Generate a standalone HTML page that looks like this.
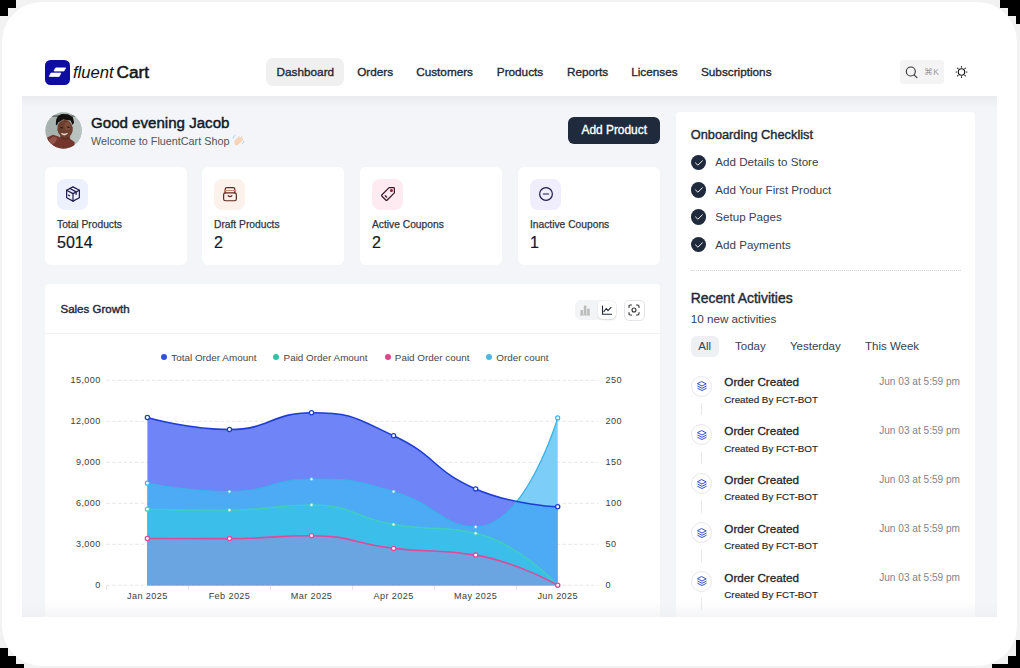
<!DOCTYPE html><html><head><meta charset="utf-8"><style>
*{box-sizing:border-box;margin:0;padding:0}
html,body{width:1020px;height:668px;overflow:hidden;background:#f2f2f2;font-family:"Liberation Sans",sans-serif;color:#1f2937}
.abs{position:absolute}
.frame{position:absolute;left:2px;top:2px;width:1015px;height:664px;background:#fff;border-radius:40px;overflow:hidden}
.blk{position:absolute;background:#000}
.content{position:absolute;left:22px;top:96px;width:975px;height:521px;background:#f4f5f8}
.cshadow{position:absolute;left:22px;top:96px;width:975px;height:12px;background:linear-gradient(to bottom,#eaebee,rgba(244,245,248,0))}
.card{position:absolute;background:#fff;border-radius:6px}
.t{position:absolute;white-space:nowrap;line-height:1}
.nav{font-size:11.75px;color:#1f2937;-webkit-text-stroke:0.35px #1f2937}
.slabel{font-size:10.25px;color:#2f3540;-webkit-text-stroke:0.25px #2f3540}
.sval{font-size:16px;color:#111827;-webkit-text-stroke:0.2px #111827}
.ibox{position:absolute;width:31px;height:31px;border-radius:8px}
.axl{font-size:9.1px;color:#3d3d3d;letter-spacing:0.4px}
.leg{font-size:9.9px;color:#474747}
.dot{position:absolute;width:6px;height:6px;border-radius:50%}
.chk{position:absolute;width:15.5px;height:15.5px;border-radius:50%;background:#1f2a3c}
.ctext{font-size:11.6px;color:#374151}
.tab{font-size:11.5px;color:#374151}
.act-ic{position:absolute;width:21px;height:21px;border-radius:50%;border:1px solid #e5e7eb;background:#fff}
.act-line{position:absolute;width:1px;height:12px;background:#e6e7ea}
.oc{font-size:11.7px;color:#20252d;-webkit-text-stroke:0.3px #20252d}
.cb{font-size:9.8px;color:#22272e;-webkit-text-stroke:0.15px #22272e}
.dt{font-size:10.1px;color:#80858d}
</style></head><body>
<div class="frame"></div>
<div class="blk" style="left:0px;top:0px;width:16px;height:8px"></div>
<div class="blk" style="left:0px;top:8px;width:8px;height:8px"></div>
<div class="blk" style="left:1000px;top:0px;width:20px;height:8px"></div>
<div class="blk" style="left:1008px;top:8px;width:12px;height:8px"></div>
<div class="blk" style="left:1016px;top:16px;width:4px;height:8px"></div>
<div class="blk" style="left:0px;top:648px;width:8px;height:20px"></div>
<div class="blk" style="left:0px;top:656px;width:16px;height:12px"></div>
<div class="blk" style="left:0px;top:664px;width:24px;height:4px"></div>
<div class="blk" style="left:1016px;top:640px;width:4px;height:28px"></div>
<div class="blk" style="left:1008px;top:656px;width:12px;height:12px"></div>
<div class="blk" style="left:992px;top:664px;width:28px;height:4px"></div>
<svg class="abs" style="left:45px;top:60px" width="25" height="25" viewBox="0 0 25 25"><rect width="25" height="25" rx="5.5" fill="#0f0ca3"/><path d="M10.7 7.9 H20.6 L18.9 11 H9 Z" fill="#fff" stroke="#fff" stroke-width="0.8" stroke-linejoin="round"/><path d="M6 13.1 H15.9 L14.2 16.4 H4.3 Z" fill="#fff" stroke="#fff" stroke-width="0.8" stroke-linejoin="round"/></svg>
<div class="t" style="left:73px;top:64.3px;font-size:16.6px;color:#111"><span style="color:#111;font-style:italic;-webkit-text-stroke:0.3px #fff;paint-order:stroke fill">fluent</span><span style="margin-left:3px;color:#151515;-webkit-text-stroke:0.55px #151515;font-size:17.2px">Cart</span></div>
<div class="abs" style="left:266px;top:58px;width:78px;height:28px;background:#f0f0f1;border-radius:7px"></div>
<div class="t nav" style="left:276.6px;top:66px">Dashboard</div>
<div class="t nav" style="left:357.2px;top:66px">Orders</div>
<div class="t nav" style="left:416.2px;top:66px">Customers</div>
<div class="t nav" style="left:496.8px;top:66px">Products</div>
<div class="t nav" style="left:567px;top:66px">Reports</div>
<div class="t nav" style="left:631.2px;top:66px">Licenses</div>
<div class="t nav" style="left:701px;top:66px">Subscriptions</div>
<div class="abs" style="left:900px;top:60px;width:44px;height:24px;background:#f4f4f5;border-radius:3px"></div>
<svg class="abs" style="left:904px;top:65px" width="15" height="15" viewBox="0 0 15 15" fill="none" stroke="#333" stroke-width="1.15"><circle cx="6.8" cy="6.5" r="4.5"/><path d="M10.1 9.9 L12.9 12.7" stroke-linecap="round"/></svg>
<div class="t" style="left:923.5px;top:67.5px;font-size:8.6px;color:#9a9a9a">&#8984;&#8202;K</div>
<svg class="abs" style="left:0;top:0" width="1020" height="100" fill="none" stroke="#111" stroke-width="1.1" stroke-linecap="round"><circle cx="961.5" cy="72" r="3.2"/><line x1="966.40" y1="72.00" x2="966.90" y2="72.00"/><line x1="964.96" y1="75.46" x2="965.32" y2="75.82"/><line x1="961.50" y1="76.90" x2="961.50" y2="77.40"/><line x1="958.04" y1="75.46" x2="957.68" y2="75.82"/><line x1="956.60" y1="72.00" x2="956.10" y2="72.00"/><line x1="958.04" y1="68.54" x2="957.68" y2="68.18"/><line x1="961.50" y1="67.10" x2="961.50" y2="66.60"/><line x1="964.96" y1="68.54" x2="965.32" y2="68.18"/></svg>
<div class="content"></div><div class="cshadow"></div>
<svg class="abs" style="left:44.5px;top:111.5px" width="37" height="37" viewBox="0 0 37 37"><defs><clipPath id="av"><circle cx="18.5" cy="18.5" r="18.2"/></clipPath></defs><g clip-path="url(#av)"><rect width="37" height="37" fill="#a6b3af"/><rect x="26" y="0" width="11" height="37" fill="#b8c3c0"/><rect x="0" y="3.2" width="37" height="1.8" fill="#6a7370"/><path d="M15.5 22 L24.5 22 L25 28.5 L15 28.5 Z" fill="#5a3022"/><ellipse cx="20.1" cy="16.8" rx="7.8" ry="9" fill="#6e3f2e" transform="rotate(-8 20 17)"/><ellipse cx="22.5" cy="14" rx="3" ry="4" fill="#8a5646" opacity=".6"/><path d="M10.8 12.5 L11.2 7.6 L13 4.1 L16.6 1.9 L23 2.3 L28 5.5 L29.1 10.5 L27.6 13 L25.5 8.6 L18 7.6 L13.2 10.6 L11.9 13.5 Z" fill="#141010"/><ellipse cx="16.6" cy="15.8" rx="1.4" ry="0.8" fill="#2a1812"/><ellipse cx="23.4" cy="15.2" rx="1.4" ry="0.8" fill="#2a1812"/><path d="M16.3 21.6 Q19.3 24.6 22.6 21.3 Q19.5 22.6 16.3 21.6Z" fill="#f3ebe6" stroke="#f3ebe6" stroke-width=".6"/><path d="M2.2 25.6 L7.9 22.7 L13 24.2 L18.7 27.8 L25.2 27 L29.5 29.9 L30 37 L2 37 Z" fill="#74352d"/><path d="M4 27.5 L8.5 24.5 L12.5 26 L10 31 L5 33 Z" fill="#9a5d52" opacity=".8"/></g></svg>
<div class="t" style="left:91px;top:114.5px;font-size:15.1px;color:#111827;-webkit-text-stroke:0.45px #111827">Good evening Jacob</div>
<div class="t" style="left:91px;top:136px;font-size:10.8px;color:#50545b">Welcome to FluentCart Shop</div>
<svg class="abs" style="left:232px;top:134px" width="13" height="13" viewBox="0 0 13 13"><path d="M3 11 Q1.5 8 3.5 5.5 L6.5 2.5 Q7.5 1.8 8 2.8 L7 4.5 L9.5 2.5 Q10.5 2 10.8 3 L8.2 6 L10.5 4.5 Q11.5 4.3 11.3 5.4 L7.5 9.5 Q5.5 11.8 3 11Z" fill="#f6d2b6"/><path d="M1.2 4 Q1.5 2 3 1.2 M10.5 9.5 Q11.5 9 12 7.5" stroke="#9cc7ea" stroke-width="0.9" fill="none" stroke-linecap="round"/></svg>
<div class="abs" style="left:568px;top:117px;width:92px;height:27px;background:#1f2a3c;border-radius:6px"></div>
<div class="t" style="left:581.5px;top:124.5px;font-size:11.9px;color:#fff;-webkit-text-stroke:0.35px #fff">Add Product</div>
<div class="card" style="left:45px;top:167px;width:142px;height:98px"></div>
<div class="ibox" style="left:57px;top:179px;background:#edf0fd"></div>
<div class="abs" style="left:63.5px;top:185px;width:18px;height:18px;line-height:0"><svg width="18" height="18" viewBox="0 0 24 24" fill="none" stroke="#1e1b4b" stroke-width="1.6" stroke-linecap="round" stroke-linejoin="round"><path d="M12 2.5 L20.5 7 V17 L12 21.5 L3.5 17 V7 Z"/><path d="M3.5 7 L12 11.5 L20.5 7"/><path d="M12 11.5 V21.5"/><path d="M7.8 4.7 L16.2 9.2 V12.5"/><path d="M6 13.5 L7.5 14.3"/></svg></div>
<div class="t slabel" style="left:57px;top:220px">Total Products</div>
<div class="t sval" style="left:57px;top:235px">5014</div>
<div class="card" style="left:202px;top:167px;width:142px;height:98px"></div>
<div class="ibox" style="left:214px;top:179px;background:#fdf1ec"></div>
<div class="abs" style="left:220.5px;top:185px;width:18px;height:18px;line-height:0"><svg width="18" height="18" viewBox="0 0 24 24" fill="none" stroke="#5e2a1e" stroke-width="1.6" stroke-linecap="round" stroke-linejoin="round"><rect x="3.5" y="10.5" width="17" height="10.5" rx="2.5"/><path d="M5.5 10.5 V6 Q5.5 3.5 8 3.5 H16 Q18.5 3.5 18.5 6 V10.5"/><path d="M5.8 7.3 H18.2" stroke="#c98a70"/><path d="M9.5 14.3 Q12 16.8 14.5 14.3"/></svg></div>
<div class="t slabel" style="left:214px;top:220px">Draft Products</div>
<div class="t sval" style="left:214px;top:235px">2</div>
<div class="card" style="left:360px;top:167px;width:142px;height:98px"></div>
<div class="ibox" style="left:372px;top:179px;background:#fdebf1"></div>
<div class="abs" style="left:378.5px;top:185px;width:18px;height:18px;line-height:0"><svg width="18" height="18" viewBox="0 0 24 24" fill="none" stroke="#3d1426" stroke-width="1.6" stroke-linecap="round" stroke-linejoin="round"><path d="M13.5 3.5 H19.5 Q20.5 3.5 20.5 4.5 V10.5 L11 20 Q10 21 9 20 L4 15 Q3 14 4 13 Z"/><circle cx="16.6" cy="7.4" r="1.2" fill="#a01838" stroke="#a01838"/><path d="M8.3 14.3 L10.3 16.3"/></svg></div>
<div class="t slabel" style="left:372px;top:220px">Active Coupons</div>
<div class="t sval" style="left:372px;top:235px">2</div>
<div class="card" style="left:518px;top:167px;width:142px;height:98px"></div>
<div class="ibox" style="left:530px;top:179px;background:#f0edfd"></div>
<div class="abs" style="left:536.5px;top:185px;width:18px;height:18px;line-height:0"><svg width="18" height="18" viewBox="0 0 24 24" fill="none" stroke="#1e1b4b" stroke-width="1.6" stroke-linecap="round"><circle cx="12" cy="12" r="8.5"/><path d="M8.5 12 H15.5"/></svg></div>
<div class="t slabel" style="left:530px;top:220px">Inactive Coupons</div>
<div class="t sval" style="left:530px;top:235px">1</div>
<div class="card" style="left:45px;top:284px;width:615px;height:333px;border-radius:4px 4px 0 0"></div>
<div class="abs" style="left:45px;top:333px;width:615px;height:1px;background:#eff0f3"></div>
<div class="t" style="left:60.5px;top:303.5px;font-size:11.5px;color:#1f2937;-webkit-text-stroke:0.4px #1f2937">Sales Growth</div>
<div class="abs" style="left:575px;top:300px;width:42px;height:20px;background:#f3f4f6;border-radius:6px"></div>
<div class="abs" style="left:597.5px;top:301px;width:18px;height:18px;background:#fff;border-radius:5px;box-shadow:0 1px 2px rgba(0,0,0,.12)"></div>
<svg class="abs" style="left:579px;top:304px" width="12" height="12" viewBox="0 0 12 12" fill="#bcbcbc"><rect x="1.5" y="6" width="2.6" height="5" rx=".6"/><rect x="4.8" y="1.5" width="2.6" height="9.5" rx=".6"/><rect x="8.1" y="4.5" width="2.6" height="6.5" rx=".6"/><rect x="1" y="10.5" width="10" height="1"/></svg>
<svg class="abs" style="left:600.5px;top:304px" width="12" height="12" viewBox="0 0 12 12" fill="none" stroke="#1f2937" stroke-width="1.1" stroke-linecap="round" stroke-linejoin="round"><path d="M1.5 2 V10.2 H10.5"/><path d="M2.8 7.6 L5.3 4.5 L7 6.6 L10 3.4"/></svg>
<div class="abs" style="left:623.5px;top:299.5px;width:21px;height:21px;background:#fff;border:1px solid #e3e4e7;border-radius:5px"></div>
<svg class="abs" style="left:628px;top:304px" width="12" height="12" viewBox="0 0 12 12" fill="none" stroke="#333" stroke-width="1.1" stroke-linecap="round"><path d="M1 3.5 V2.2 Q1 1 2.2 1 H3.5 M8.5 1 H9.8 Q11 1 11 2.2 V3.5 M11 8.5 V9.8 Q11 11 9.8 11 H8.5 M3.5 11 H2.2 Q1 11 1 9.8 V8.5"/><circle cx="6" cy="6" r="2"/></svg>
<div class="dot" style="left:161px;top:354.3px;background:#2f50e0"></div>
<div class="t leg" style="left:171.3px;top:352.5px">Total Order Amount</div>
<div class="dot" style="left:273px;top:354.3px;background:#2ec4a8"></div>
<div class="t leg" style="left:283.6px;top:352.5px">Paid Order Amount</div>
<div class="dot" style="left:384.5px;top:354.3px;background:#e0458a"></div>
<div class="t leg" style="left:394.8px;top:352.5px">Paid Order count</div>
<div class="dot" style="left:486px;top:354.3px;background:#4cb8e8"></div>
<div class="t leg" style="left:496.3px;top:352.5px">Order count</div>
<div class="t axl" style="right:919.3px;top:375.7px">15,000</div>
<div class="t axl" style="left:605.5px;top:375.7px">250</div>
<div class="t axl" style="right:919.3px;top:416.7px">12,000</div>
<div class="t axl" style="left:605.5px;top:416.7px">200</div>
<div class="t axl" style="right:919.3px;top:457.7px">9,000</div>
<div class="t axl" style="left:605.5px;top:457.7px">150</div>
<div class="t axl" style="right:919.3px;top:498.7px">6,000</div>
<div class="t axl" style="left:605.5px;top:498.7px">100</div>
<div class="t axl" style="right:919.3px;top:539.6999999999999px">3,000</div>
<div class="t axl" style="left:605.5px;top:539.6999999999999px">50</div>
<div class="t axl" style="right:919.3px;top:580.6999999999999px">0</div>
<div class="t axl" style="left:605.5px;top:580.6999999999999px">0</div>
<div class="t axl" style="left:107.4px;width:80px;text-align:center;top:592.2px;color:#3d3d3d">Jan 2025</div>
<div class="t axl" style="left:189.46px;width:80px;text-align:center;top:592.2px;color:#3d3d3d">Feb 2025</div>
<div class="t axl" style="left:271.52px;width:80px;text-align:center;top:592.2px;color:#3d3d3d">Mar 2025</div>
<div class="t axl" style="left:353.58000000000004px;width:80px;text-align:center;top:592.2px;color:#3d3d3d">Apr 2025</div>
<div class="t axl" style="left:435.64px;width:80px;text-align:center;top:592.2px;color:#3d3d3d">May 2025</div>
<div class="t axl" style="left:517.7px;width:80px;text-align:center;top:592.2px;color:#3d3d3d">Jun 2025</div>
<svg class="abs" width="1020" height="668" viewBox="0 0 1020 668" style="left:0;top:0">
<defs><clipPath id="ct"><path d="M147.40,417.50 C147.40,417.50 188.63,429.50 229.46,429.50 C270.69,429.50 270.84,412.80 311.52,412.80 C352.90,412.80 355.38,417.99 393.58,435.70 C437.44,456.04 431.49,469.80 475.64,488.90 C513.55,505.30 557.70,506.70 557.70,506.70 L557.70,585.3 L147.40,585.3 Z"/></clipPath></defs>
<line x1="106.5" y1="380.3" x2="598.5" y2="380.3" stroke="#e6e6e6" stroke-width="1" stroke-dasharray="3.5,2.2"/>
<line x1="106.5" y1="421.3" x2="598.5" y2="421.3" stroke="#e6e6e6" stroke-width="1" stroke-dasharray="3.5,2.2"/>
<line x1="106.5" y1="462.3" x2="598.5" y2="462.3" stroke="#e6e6e6" stroke-width="1" stroke-dasharray="3.5,2.2"/>
<line x1="106.5" y1="503.3" x2="598.5" y2="503.3" stroke="#e6e6e6" stroke-width="1" stroke-dasharray="3.5,2.2"/>
<line x1="106.5" y1="544.3" x2="598.5" y2="544.3" stroke="#e6e6e6" stroke-width="1" stroke-dasharray="3.5,2.2"/>
<line x1="106.5" y1="585.3" x2="598.5" y2="585.3" stroke="#e6e6e6" stroke-width="1" stroke-dasharray="3.5,2.2"/>
<line x1="106.4" y1="585.3" x2="106.4" y2="590" stroke="#e3e3e3" stroke-width="1"/>
<line x1="188.5" y1="585.3" x2="188.5" y2="590" stroke="#e3e3e3" stroke-width="1"/>
<line x1="270.5" y1="585.3" x2="270.5" y2="590" stroke="#e3e3e3" stroke-width="1"/>
<line x1="352.6" y1="585.3" x2="352.6" y2="590" stroke="#e3e3e3" stroke-width="1"/>
<line x1="434.6" y1="585.3" x2="434.6" y2="590" stroke="#e3e3e3" stroke-width="1"/>
<line x1="516.7" y1="585.3" x2="516.7" y2="590" stroke="#e3e3e3" stroke-width="1"/>
<path d="M147.40,417.50 C147.40,417.50 188.63,429.50 229.46,429.50 C270.69,429.50 270.84,412.80 311.52,412.80 C352.90,412.80 355.38,417.99 393.58,435.70 C437.44,456.04 431.49,469.80 475.64,488.90 C513.55,505.30 557.70,506.70 557.70,506.70 L557.70,585.3 L147.40,585.3 Z" fill="#6f84f6"/>
<path d="M147.40,483.20 C147.40,483.20 188.55,491.60 229.46,491.60 C270.61,491.60 270.49,479.20 311.52,479.20 C352.55,479.20 354.07,480.02 393.58,491.50 C436.13,503.87 443.16,526.90 475.64,526.90 C525.22,526.90 557.70,417.90 557.70,417.90 L557.70,585.3 L147.40,585.3 Z" fill="#7ccdf7"/>
<path d="M147.40,483.20 C147.40,483.20 188.55,491.60 229.46,491.60 C270.61,491.60 270.49,479.20 311.52,479.20 C352.55,479.20 354.07,480.02 393.58,491.50 C436.13,503.87 443.16,526.90 475.64,526.90 C525.22,526.90 557.70,417.90 557.70,417.90 L557.70,585.3 L147.40,585.3 Z" fill="#4dabf5" clip-path="url(#ct)"/>
<path d="M147.40,509.20 C147.40,509.20 188.47,510.10 229.46,510.10 C270.53,510.10 271.02,504.90 311.52,504.90 C353.08,504.90 352.10,517.32 393.58,524.50 C434.16,531.52 437.95,524.50 475.64,533.30 C520.01,543.66 557.70,585.30 557.70,585.30 L557.70,585.3 L147.40,585.3 Z" fill="#3cbeea"/>
<path d="M147.40,538.50 C147.40,538.50 188.44,538.60 229.46,538.60 C270.50,538.60 270.72,535.70 311.52,535.70 C352.78,535.70 352.38,543.53 393.58,548.40 C434.44,553.23 435.84,548.40 475.64,555.10 C517.90,562.22 557.70,585.30 557.70,585.30 L557.70,585.3 L147.40,585.3 Z" fill="#6aa5e1"/>
<path d="M147.40,509.20 C147.40,509.20 188.47,510.10 229.46,510.10 C270.53,510.10 271.02,504.90 311.52,504.90 C353.08,504.90 352.10,517.32 393.58,524.50 C434.16,531.52 437.95,524.50 475.64,533.30 C520.01,543.66 557.70,585.30 557.70,585.30" fill="none" stroke="#3fd3b6" stroke-width="1.4" stroke-opacity="0.85"/>
<path d="M147.40,483.20 C147.40,483.20 188.55,491.60 229.46,491.60 C270.61,491.60 270.49,479.20 311.52,479.20 C352.55,479.20 354.07,480.02 393.58,491.50 C436.13,503.87 443.16,526.90 475.64,526.90 C525.22,526.90 557.70,417.90 557.70,417.90" fill="none" stroke="#3cb1ea" stroke-width="1.3"/>
<path d="M147.40,538.50 C147.40,538.50 188.44,538.60 229.46,538.60 C270.50,538.60 270.72,535.70 311.52,535.70 C352.78,535.70 352.38,543.53 393.58,548.40 C434.44,553.23 435.84,548.40 475.64,555.10 C517.90,562.22 557.70,585.30 557.70,585.30" fill="none" stroke="#e0489b" stroke-width="1.6"/>
<path d="M147.40,417.50 C147.40,417.50 188.63,429.50 229.46,429.50 C270.69,429.50 270.84,412.80 311.52,412.80 C352.90,412.80 355.38,417.99 393.58,435.70 C437.44,456.04 431.49,469.80 475.64,488.90 C513.55,505.30 557.70,506.70 557.70,506.70" fill="none" stroke="#1d3dd3" stroke-width="1.6"/>
<circle cx="147.40" cy="509.20" r="2.0" fill="#fff" stroke="#3fd3b6" stroke-width="1.2"/>
<circle cx="229.46" cy="510.10" r="1.6" fill="#fff" stroke="#3fd3b6" stroke-width="0.8"/>
<circle cx="311.52" cy="504.90" r="1.6" fill="#fff" stroke="#3fd3b6" stroke-width="0.8"/>
<circle cx="393.58" cy="524.50" r="1.6" fill="#fff" stroke="#3fd3b6" stroke-width="0.8"/>
<circle cx="475.64" cy="533.30" r="1.6" fill="#fff" stroke="#3fd3b6" stroke-width="0.8"/>
<circle cx="147.40" cy="483.20" r="2.0" fill="#fff" stroke="#3cb1ea" stroke-width="1.2"/>
<circle cx="229.46" cy="491.60" r="1.6" fill="#fff" stroke="#3cb1ea" stroke-width="0.8"/>
<circle cx="311.52" cy="479.20" r="1.6" fill="#fff" stroke="#3cb1ea" stroke-width="0.8"/>
<circle cx="393.58" cy="491.50" r="1.6" fill="#fff" stroke="#3cb1ea" stroke-width="0.8"/>
<circle cx="475.64" cy="526.90" r="1.6" fill="#fff" stroke="#3cb1ea" stroke-width="0.8"/>
<circle cx="557.70" cy="417.90" r="2.0" fill="#fff" stroke="#3cb1ea" stroke-width="1.2"/>
<circle cx="147.40" cy="538.50" r="2.1" fill="#fff" stroke="#e0489b" stroke-width="1.3"/>
<circle cx="229.46" cy="538.60" r="2.1" fill="#fff" stroke="#e0489b" stroke-width="1.3"/>
<circle cx="311.52" cy="535.70" r="2.1" fill="#fff" stroke="#e0489b" stroke-width="1.3"/>
<circle cx="393.58" cy="548.40" r="2.1" fill="#fff" stroke="#e0489b" stroke-width="1.3"/>
<circle cx="475.64" cy="555.10" r="2.1" fill="#fff" stroke="#e0489b" stroke-width="1.3"/>
<circle cx="557.70" cy="585.30" r="2.1" fill="#fff" stroke="#e0489b" stroke-width="1.3"/>
<circle cx="147.40" cy="417.50" r="2.1" fill="#fff" stroke="#1d3dd3" stroke-width="1.3"/>
<circle cx="229.46" cy="429.50" r="2.1" fill="#fff" stroke="#1d3dd3" stroke-width="1.3"/>
<circle cx="311.52" cy="412.80" r="2.1" fill="#fff" stroke="#1d3dd3" stroke-width="1.3"/>
<circle cx="393.58" cy="435.70" r="2.1" fill="#fff" stroke="#1d3dd3" stroke-width="1.3"/>
<circle cx="475.64" cy="488.90" r="2.1" fill="#fff" stroke="#1d3dd3" stroke-width="1.3"/>
<circle cx="557.70" cy="506.70" r="2.1" fill="#fff" stroke="#1d3dd3" stroke-width="1.3"/>
</svg>
<div class="card" style="left:676px;top:112px;width:299px;height:505px;border-radius:4px 4px 0 0"></div>
<div class="t" style="left:690.7px;top:128.5px;font-size:12.8px;color:#1f2937;-webkit-text-stroke:0.4px #1f2937">Onboarding Checklist</div>
<div class="chk" style="left:690.5px;top:154.55px"></div>
<svg class="abs" style="left:690.5px;top:154.55px" width="15.5" height="15.5" viewBox="0 0 15.5 15.5" fill="none" stroke="#fff" stroke-width="0.95" stroke-linecap="round" stroke-linejoin="round"><path d="M4.5 7.9 L6.9 10.2 L11.4 5.8"/></svg>
<div class="t ctext" style="left:715.3px;top:156.30px">Add Details to Store</div>
<div class="chk" style="left:690.5px;top:182.00px"></div>
<svg class="abs" style="left:690.5px;top:182.00px" width="15.5" height="15.5" viewBox="0 0 15.5 15.5" fill="none" stroke="#fff" stroke-width="0.95" stroke-linecap="round" stroke-linejoin="round"><path d="M4.5 7.9 L6.9 10.2 L11.4 5.8"/></svg>
<div class="t ctext" style="left:715.3px;top:183.75px">Add Your First Product</div>
<div class="chk" style="left:690.5px;top:209.45px"></div>
<svg class="abs" style="left:690.5px;top:209.45px" width="15.5" height="15.5" viewBox="0 0 15.5 15.5" fill="none" stroke="#fff" stroke-width="0.95" stroke-linecap="round" stroke-linejoin="round"><path d="M4.5 7.9 L6.9 10.2 L11.4 5.8"/></svg>
<div class="t ctext" style="left:715.3px;top:211.20px">Setup Pages</div>
<div class="chk" style="left:690.5px;top:236.90px"></div>
<svg class="abs" style="left:690.5px;top:236.90px" width="15.5" height="15.5" viewBox="0 0 15.5 15.5" fill="none" stroke="#fff" stroke-width="0.95" stroke-linecap="round" stroke-linejoin="round"><path d="M4.5 7.9 L6.9 10.2 L11.4 5.8"/></svg>
<div class="t ctext" style="left:715.3px;top:238.65px">Add Payments</div>
<div class="abs" style="left:690.5px;top:270px;width:270px;height:0;border-top:1px dotted #d4d7dc"></div>
<div class="t" style="left:690.7px;top:292px;font-size:13.9px;color:#1f2937;-webkit-text-stroke:0.4px #1f2937">Recent Activities</div>
<div class="t" style="left:690.7px;top:313px;font-size:11.7px;color:#374151">10 new activities</div>
<div class="abs" style="left:690.7px;top:335.7px;width:28.6px;height:21px;background:#eef0f3;border-radius:6px"></div>
<div class="t tab" style="left:698.3px;top:341px">All</div>
<div class="t tab" style="left:735px;top:341px">Today</div>
<div class="t tab" style="left:790px;top:341px">Yesterday</div>
<div class="t tab" style="left:865px;top:341px">This Week</div>
<div class="act-ic" style="left:690.5px;top:375.50px"></div>
<svg class="abs" style="left:696.5px;top:381.00px" width="10" height="10" viewBox="0 0 10 10" fill="none" stroke="#2a44d8" stroke-width="0.95" stroke-linejoin="round" stroke-linecap="round"><path d="M5 0.7 L9.2 2.9 L5 5 L0.8 2.9 Z"/><path d="M0.8 5.2 L5 7.3 L9.2 5.2"/><path d="M0.8 7.4 L5 9.5 L9.2 7.4"/></svg>
<div class="act-line" style="left:700.5px;top:403.00px"></div>
<div class="t oc" style="left:724.3px;top:376.30px">Order Created</div>
<div class="t cb" style="left:724.3px;top:394.70px">Created By FCT-BOT</div>
<div class="t dt" style="right:60px;top:377.30px">Jun 03 at 5:59 pm</div>
<div class="act-ic" style="left:690.5px;top:424.35px"></div>
<svg class="abs" style="left:696.5px;top:429.85px" width="10" height="10" viewBox="0 0 10 10" fill="none" stroke="#2a44d8" stroke-width="0.95" stroke-linejoin="round" stroke-linecap="round"><path d="M5 0.7 L9.2 2.9 L5 5 L0.8 2.9 Z"/><path d="M0.8 5.2 L5 7.3 L9.2 5.2"/><path d="M0.8 7.4 L5 9.5 L9.2 7.4"/></svg>
<div class="act-line" style="left:700.5px;top:451.85px"></div>
<div class="t oc" style="left:724.3px;top:425.15px">Order Created</div>
<div class="t cb" style="left:724.3px;top:443.55px">Created By FCT-BOT</div>
<div class="t dt" style="right:60px;top:426.15px">Jun 03 at 5:59 pm</div>
<div class="act-ic" style="left:690.5px;top:473.20px"></div>
<svg class="abs" style="left:696.5px;top:478.70px" width="10" height="10" viewBox="0 0 10 10" fill="none" stroke="#2a44d8" stroke-width="0.95" stroke-linejoin="round" stroke-linecap="round"><path d="M5 0.7 L9.2 2.9 L5 5 L0.8 2.9 Z"/><path d="M0.8 5.2 L5 7.3 L9.2 5.2"/><path d="M0.8 7.4 L5 9.5 L9.2 7.4"/></svg>
<div class="act-line" style="left:700.5px;top:500.70px"></div>
<div class="t oc" style="left:724.3px;top:474.00px">Order Created</div>
<div class="t cb" style="left:724.3px;top:492.40px">Created By FCT-BOT</div>
<div class="t dt" style="right:60px;top:475.00px">Jun 03 at 5:59 pm</div>
<div class="act-ic" style="left:690.5px;top:522.05px"></div>
<svg class="abs" style="left:696.5px;top:527.55px" width="10" height="10" viewBox="0 0 10 10" fill="none" stroke="#2a44d8" stroke-width="0.95" stroke-linejoin="round" stroke-linecap="round"><path d="M5 0.7 L9.2 2.9 L5 5 L0.8 2.9 Z"/><path d="M0.8 5.2 L5 7.3 L9.2 5.2"/><path d="M0.8 7.4 L5 9.5 L9.2 7.4"/></svg>
<div class="act-line" style="left:700.5px;top:549.55px"></div>
<div class="t oc" style="left:724.3px;top:522.85px">Order Created</div>
<div class="t cb" style="left:724.3px;top:541.25px">Created By FCT-BOT</div>
<div class="t dt" style="right:60px;top:523.85px">Jun 03 at 5:59 pm</div>
<div class="act-ic" style="left:690.5px;top:570.90px"></div>
<svg class="abs" style="left:696.5px;top:576.40px" width="10" height="10" viewBox="0 0 10 10" fill="none" stroke="#2a44d8" stroke-width="0.95" stroke-linejoin="round" stroke-linecap="round"><path d="M5 0.7 L9.2 2.9 L5 5 L0.8 2.9 Z"/><path d="M0.8 5.2 L5 7.3 L9.2 5.2"/><path d="M0.8 7.4 L5 9.5 L9.2 7.4"/></svg>
<div class="act-line" style="left:700.5px;top:598.40px"></div>
<div class="t oc" style="left:724.3px;top:571.70px">Order Created</div>
<div class="t cb" style="left:724.3px;top:590.10px">Created By FCT-BOT</div>
<div class="t dt" style="right:60px;top:572.70px">Jun 03 at 5:59 pm</div>
<div class="abs" style="left:22px;top:600px;width:975px;height:17px;background:linear-gradient(to bottom,rgba(240,241,244,0),rgba(236,237,240,.55))"></div>
</body></html>
